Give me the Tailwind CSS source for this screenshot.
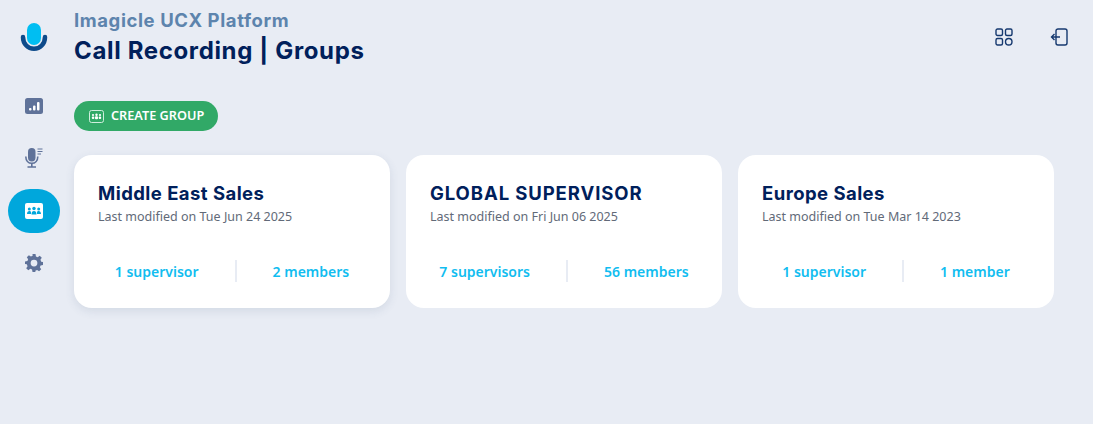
<!DOCTYPE html>
<html lang="en">
<head>
    <meta charset="UTF-8">
    <title>Call Recording | Groups</title>
    <script src="https://cdn.jsdelivr.net/npm/@tailwindcss/browser@4"></script>
</head>
<body class="bg-[#e8ecf4] h-screen overflow-hidden flex font-['Noto_Sans',sans-serif]">
    <!-- Sidebar -->
    <aside class="w-[74px] shrink-0 flex flex-col items-center pr-[6px]">
        <svg class="mt-[22px]" width="28" height="30" viewBox="0 0 28 30" fill="none">
            <path d="M3 15C3 22 8 26.750 14 26.750S25 22 25 15" stroke="#0d4a8a" stroke-width="4.500" stroke-linecap="round" />
            <rect x="7" y="1" width="14" height="22" rx="7" fill="#00bef2" />
        </svg>
        <a class="mt-[32px] h-[44px] w-[52px] flex items-center justify-center">
            <svg width="18" height="16" viewBox="0 0 18 16"><rect width="18" height="16" rx="2.500" fill="#5f7299" /><rect x="4" y="10" width="2.500" height="2.500" rx="1" fill="#fff" /><rect x="8" y="7.500" width="2.500" height="5" rx="1" fill="#fff" /><rect x="12" y="4" width="2.500" height="8.500" rx="1" fill="#fff" /></svg>
        </a>
        <a class="mt-[8px] h-[44px] w-[52px] flex items-center justify-center">
            <svg width="18" height="20" viewBox="0 0 18 20" fill="none"><rect x="3" y="0" width="7.500" height="13.500" rx="3.700" fill="#5f7299" /><path d="M.8 8.500c0 4 2.500 6.800 6 6.800s6-2.800 6-6.800" stroke="#5f7299" stroke-width="1.600" /><path d="M6.800 15v3.500M2.500 19h8.500" stroke="#5f7299" stroke-width="1.600" /><path d="M12.500 1h5M12.500 3.500h5M12.500 6h3.500" stroke="#5f7299" stroke-width="1.200" /></svg>
        </a>
        <a class="mt-[9px] h-[44px] w-[52px] rounded-[22px] bg-[#00a7dc] flex items-center justify-center">
            <svg width="18" height="16" viewBox="0 0 18 16"><rect width="18" height="16" rx="2" fill="#fff" /><g fill="#00a7dc"><circle cx="4.300" cy="6" r="1.500" /><circle cx="9" cy="5.500" r="1.700" /><circle cx="13.700" cy="6" r="1.500" /><path d="M2 11c0-2 1-3 2.300-3S6 8.500 6 9.500V11zM6.500 11.500c0-2.500 1-3.500 2.500-3.500s2.500 1 2.500 3.500zM12 11V9.500c0-1 .5-1.500 1.700-1.500S16 9 16 11z" /></g></svg>
        </a>
        <a class="mt-[8px] h-[44px] w-[52px] flex items-center justify-center">
            <svg width="18" height="18" viewBox="0 0 24 24" fill="#5f7299"><path fill-rule="evenodd" d="M10 0h4l.6 3.200 2.300 1 2.700-1.900 2.800 2.800-1.800 2.700 1 2.400L24 10.800v3.900l-3.200.6-1 2.300 1.800 2.700-2.800 2.800-2.700-1.800-2.300.9L13.900 24H10l-.6-3.200-2.300-1-2.700 1.900-2.800-2.800 1.800-2.700-1-2.400L0 13.200V10l3.200-.7 1-2.300L2.400 4.300l2.800-2.800 2.700 1.800 2.300-1zM12 7.500a4.500 4.500 0 1 0 0 9 4.500 4.500 0 0 0 0-9z" /></svg>
        </a>
    </aside>

    <!-- Main -->
    <main class="flex-1 min-w-0 pr-[25px]">
        <header class="flex justify-between items-start">
            <div class="pt-[9px]">
                <p class="text-[18.500px] leading-[22px] tracking-[0.6px] font-bold text-[#5d84ad] font-['Inter',sans-serif]">Imagicle UCX Platform</p>
                <h1 class="mt-[5px] text-[24px] leading-[30px] tracking-[0.65px] font-bold text-[#00205b] font-['Inter',sans-serif]">Call Recording | Groups</h1>
            </div>
            <div class="flex items-center gap-[37px] pt-[28px]">
                <svg width="18" height="18" viewBox="0 0 18 18" fill="none" stroke="#16396f" stroke-width="1.400"><rect x="1" y="1" width="6.500" height="6.500" rx="1.500" /><rect x="10.500" y="1" width="6.500" height="6.500" rx="1.500" /><rect x="1" y="10.500" width="6.500" height="6.500" rx="1.500" /><circle cx="13.750" cy="13.750" r="3.250" /></svg>
                <svg width="18" height="18" viewBox="0 0 18 18" fill="none" stroke="#16396f" stroke-width="1.400"><rect x="6" y="1" width="11" height="16" rx="2" /><path d="M10 9H1.500M4.500 6 1.500 9l3 3" /></svg>
            </div>
        </header>

        <button class="mt-[35px] h-[30px] w-[144px] rounded-full bg-[#31a967] flex items-center pl-[15px] gap-[7px] text-white text-[12.700px] font-semibold">
            <svg width="15" height="13" viewBox="0 0 15 13"><rect x=".5" y=".5" width="14" height="12" rx="2" fill="none" stroke="#cfeedd" /><g fill="#fff"><circle cx="4" cy="5" r="1.100" /><circle cx="7.500" cy="4.700" r="1.200" /><circle cx="11" cy="5" r="1.100" /><rect x="2.800" y="6.500" width="2.500" height="2.500" rx="1" /><rect x="6" y="6.300" width="3" height="3" rx="1" /><rect x="9.700" y="6.500" width="2.500" height="2.500" rx="1" /></g></svg>
            CREATE GROUP
        </button>

        <section class="mt-[24px] mr-[14px] grid grid-cols-3 gap-[16px]">
            <article class="h-[153px] rounded-[18px] bg-white shadow-[0_3px_10px_rgba(60,80,120,0.12)] pt-[25px]">
                <h2 class="px-[24px] text-[18.500px] leading-[26px] tracking-[0.45px] font-bold text-[#00205b] font-['Inter',sans-serif]">Middle East Sales</h2>
                <p class="px-[24px] mt-[2px] text-[12.500px] leading-[18px] text-[#626a78]">Last modified on Tue Jun 24 2025</p>
                <div class="mt-[34px] flex items-center justify-center gap-[36px] h-[22px] text-[14px] font-semibold text-[#11bdf0]">
                    <span>1 supervisor</span>
                    <span class="w-[2px] h-[22px] bg-[#e8ecf4]"></span>
                    <span>2 members</span>
                </div>
            </article>
            <article class="h-[153px] rounded-[18px] bg-white pt-[25px]">
                <h2 class="px-[24px] text-[18.500px] leading-[26px] tracking-[0.9px] font-bold text-[#00205b] font-['Inter',sans-serif]">GLOBAL SUPERVISOR</h2>
                <p class="px-[24px] mt-[2px] text-[12.500px] leading-[18px] text-[#626a78]">Last modified on Fri Jun 06 2025</p>
                <div class="mt-[34px] flex items-center justify-center gap-[36px] h-[22px] text-[14px] font-semibold text-[#11bdf0]">
                    <span>7 supervisors</span>
                    <span class="w-[2px] h-[22px] bg-[#e8ecf4]"></span>
                    <span>56 members</span>
                </div>
            </article>
            <article class="h-[153px] rounded-[18px] bg-white pt-[25px]">
                <h2 class="px-[24px] text-[18.500px] leading-[26px] tracking-[0.45px] font-bold text-[#00205b] font-['Inter',sans-serif]">Europe Sales</h2>
                <p class="px-[24px] mt-[2px] text-[12.500px] leading-[18px] text-[#626a78]">Last modified on Tue Mar 14 2023</p>
                <div class="mt-[34px] flex items-center justify-center gap-[36px] h-[22px] text-[14px] font-semibold text-[#11bdf0]">
                    <span>1 supervisor</span>
                    <span class="w-[2px] h-[22px] bg-[#e8ecf4]"></span>
                    <span>1 member</span>
                </div>
            </article>
        </section>
    </main>
</body>
</html>
